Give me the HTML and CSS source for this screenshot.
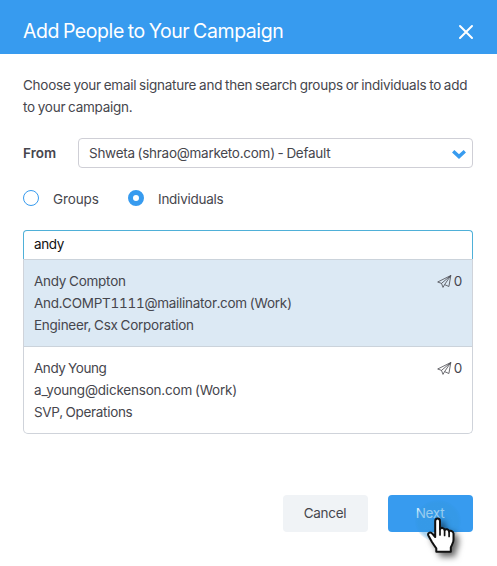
FILE: index.html
```html
<!DOCTYPE html>
<html lang="en">
<head>
<meta charset="utf-8">
<title>Add People to Your Campaign</title>
<link rel="stylesheet" href="styles.css">
</head>
<body>
<main class="dialog">
  <header class="header">
    <h1 class="title">Add People to Your Campaign</h1>
    <svg class="close" width="16" height="16" viewBox="0 0 16 16"><path d="M2 2 14 14M14 2 2 14"/></svg>
  </header>
  <section class="content">
    <p class="intro">Choose your email signature and then search groups or individuals to add<br>to your campaign.</p>
    <div class="from">
      <span class="from-label">From</span>
      <div class="select">
        <span class="select-value">Shweta (shrao@marketo.com) - Default</span>
        <svg width="14" height="10" viewBox="0 0 14 10"><path d="M1.2 2.2 7 7.6 12.8 2.2"/></svg>
      </div>
    </div>
    <div class="choices">
      <span class="radio"></span><span class="groups">Groups</span>
      <span class="radio radio-on"></span><span>Individuals</span>
    </div>
    <div class="search"><span class="query">andy</span></div>
    <ul class="results">
      <li class="result result-active">
        <div><div>Andy Compton</div><div class="email-wide">And.COMPT1111@mailinator.com (Work)</div><div>Engineer, Csx Corporation</div></div>
        <div class="count"><svg width="15" height="14" viewBox="0 0 15 14"><path d="M.7 8 13.8 1.5 11.9 12.5 7.6 10.6 13.8 1.5 4.5 9.4.7 8M4.5 9.4 6 13.4 7.6 10.6"/></svg>0</div>
      </li>
      <li class="result">
        <div><div class="name-tight">Andy Young</div><div class="email">a_young@dickenson.com (Work)</div><div class="role-tight">SVP, Operations</div></div>
        <div class="count"><svg width="15" height="14" viewBox="0 0 15 14"><path d="M.7 8 13.8 1.5 11.9 12.5 7.6 10.6 13.8 1.5 4.5 9.4.7 8M4.5 9.4 6 13.4 7.6 10.6"/></svg>0</div>
      </li>
    </ul>
    <footer class="actions">
      <button class="button cancel">Cancel</button>
      <button class="button next">Next</button>
    </footer>
  </section>
  <span class="press"></span>
  <svg class="pointer" width="50" height="54" viewBox="0 0 50 54"><path d="M15.2 4.2q0-2.6 2.4-2.6t2.4 2.6v8q.5-1.5 2.4-1.3t2.2 2.2q.8-1.2 2.5-.8t2 2.2q.8-1 2.4-.5t2 2.4v6.4q0 2.2-1.2 4.3l-1.5 3.2v4.4H16.3v-3.4q-2.6-3.4-4.5-6.5l-3.3-6q-1.1-2.2.6-3t3.6 1.4l2.5 2.8z"/><path class="fingers" d="M20 12v6M24.6 13.5v5M29.1 15v4.5"/></svg>
</main>
</body>
</html>
```
FILE: styles.css
```css
* { box-sizing: border-box; }
body { margin: 0; background: #fff; color: #46464d; font: 13.5px/22px Inter, "Liberation Sans", sans-serif; letter-spacing: -.25px; word-spacing: -.7px; }
.dialog { position: relative; width: 497px; height: 566px; overflow: hidden; }
.header { height: 54px; background: #379bef; display: flex; align-items: center; justify-content: space-between; padding: 9px 23px 0; }
.title { margin: 0; padding-bottom: 2px; color: #fff; font-size: 19.5px; line-height: 28px; font-weight: 400; letter-spacing: -.42px; word-spacing: -1.2px; white-space: nowrap; }
svg { fill: none; stroke: currentColor; display: block; }
.close { color: #fff; stroke-width: 2; stroke-linecap: round; }
.content { padding: 20px 24px 0 23px; }
.intro { margin: 0; white-space: nowrap; }
.from { display: flex; align-items: center; margin-top: 20px; height: 30px; }
.from-label { width: 55px; font-weight: 600; letter-spacing: .05px; }
.select { flex: 1; height: 30px; border: 1px solid #cfcfd6; border-radius: 4px; display: flex; align-items: center; justify-content: space-between; padding: 0 6px 0 10px; }
.select-value { letter-spacing: -.27px; }
.select svg { stroke: #379bef; stroke-width: 3.4; margin-top: 1px; }
.choices { display: flex; align-items: center; height: 22px; margin-top: 20px; }
.radio { width: 16px; height: 16px; border: 1px solid #379bef; border-radius: 50%; margin: 0 14px 2px 0; }
.radio-on { border: 5px solid #379bef; margin-left: 30px; }
.groups { width: 45px; letter-spacing: -.1px; }
.search { height: 29px; margin-top: 20px; border: 1px solid #4fb0d8; border-bottom: 0; border-radius: 4px 4px 0 0; padding: 2px 10px; color: #111; }
.query { letter-spacing: -.4px; }
.results { margin: 0; padding: 0; list-style: none; border: 1px solid #cfd3da; border-top: 0; border-radius: 0 0 5px 5px; overflow: hidden; }
.result { height: 87px; border-top: 1px solid #cbd3db; padding: 10px; display: flex; justify-content: space-between; white-space: nowrap; }
.result-active { background: #dce9f4; }
.email-wide { font-feature-settings: "tnum"; letter-spacing: -.27px; }
.email { letter-spacing: -.2px; }
.name-tight { letter-spacing: -.45px; }
.role-tight { letter-spacing: -.31px; }
.count { display: flex; align-items: center; height: 22px; gap: 2px; }
.count svg { stroke-width: .8; stroke-linejoin: round; }
.actions { display: flex; justify-content: flex-end; gap: 20px; margin-top: 61px; }
.button { width: 85px; height: 37px; border: 0; border-radius: 4px; font: inherit; letter-spacing: -.3px; color: #46464d; background: #f0f3f6; padding: 0 1px 1px 0; }
.next { background: #379bef; color: #d8eefc; }
.press { position: absolute; left: 415px; top: 500px; width: 46px; height: 42px; border-radius: 50%; background: radial-gradient(closest-side, rgba(50,150,215,.35), rgba(50,150,220,.4) 85%, rgba(40,145,220,.1)); }
.pointer { position: absolute; left: 420px; top: 517px; filter: drop-shadow(4px 4px 3px rgba(0,0,0,.6)); }
.pointer path { fill: #fff; stroke: #111; stroke-width: 2; stroke-linejoin: round; }
.pointer .fingers { fill: none; stroke-width: 1.7; stroke-linecap: round; }
```
